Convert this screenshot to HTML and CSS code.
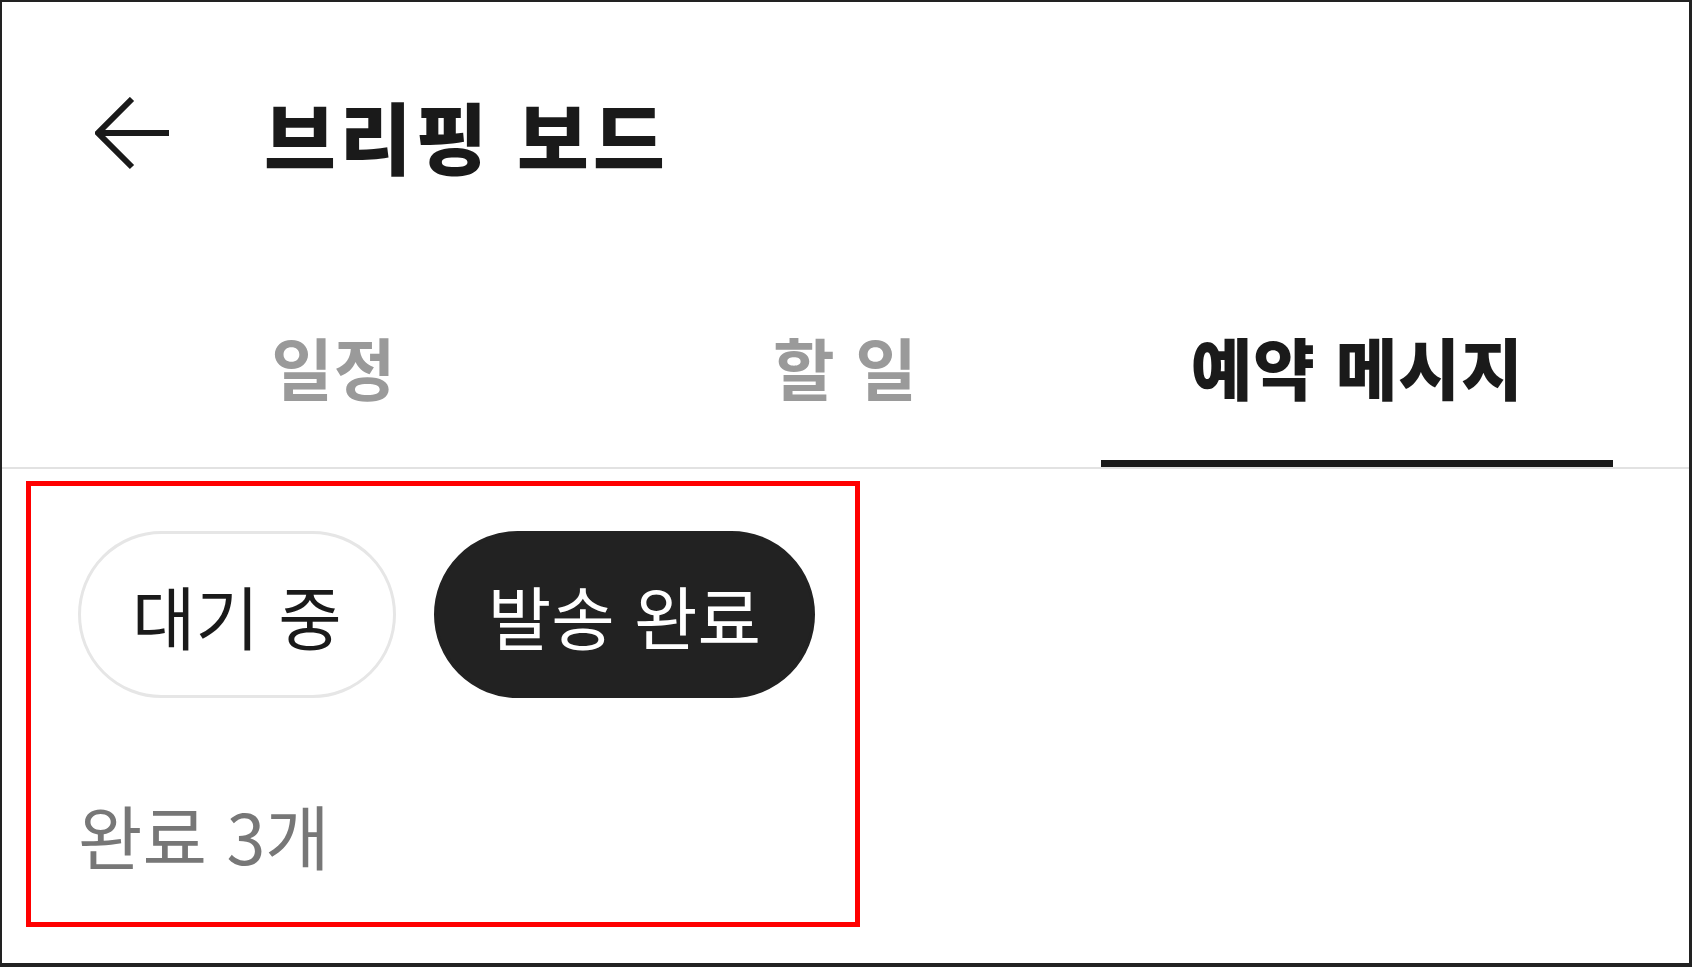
FILE: index.html
```html
<!DOCTYPE html>
<html lang="ko">
<head>
    <meta charset="UTF-8">
    <meta name="viewport" content="width=device-width, initial-scale=1.0">
    <title>브리핑 보드</title>
    <link rel="stylesheet" href="styles.css">
</head>
<body>
    <div class="screen">
        <header class="header">
            <button class="back-btn" aria-label="뒤로">
                <svg width="75" height="74" viewBox="0 0 75 74">
                    <path d="M37 2 L3 36 L37 70 M3 36 L74 36" fill="none" stroke="#1a1a1a" stroke-width="6"/>
                </svg>
            </button>
            <h1 class="title">브리핑 보드</h1>
        </header>

        <nav class="tabs-bar">
            <div class="tab">일정</div>
            <div class="tab">할 일</div>
            <div class="tab active">예약 메시지</div>
        </nav>

        <section class="content">
            <div class="chips">
                <button class="chip">대기 중</button>
                <button class="chip selected">발송 완료</button>
            </div>
            <p class="count">완료 3개</p>
        </section>

        <div class="highlight"></div>
    </div>
</body>
</html>
```

FILE: styles.css
```css
* {
    box-sizing: border-box;
}
body {
    margin: 0;
    background: #fff;
    font-family: "Noto Sans CJK KR", "Noto Sans", sans-serif;
    color: #1a1a1a;
}
.screen {
    position: relative;
    width: 1692px;
    height: 967px;
    border: 2px solid #222;
    border-right-width: 3px;
    border-bottom-width: 4px;
    background: #fff;
    overflow: hidden;
}
.header {
    display: flex;
    align-items: center;
    height: 268px;
    padding-left: 93px;
}
.back-btn {
    display: flex;
    padding: 0;
    border: none;
    background: none;
    margin-top: -4px;
}
.title {
    margin: 0 0 0 94px;
    font-size: 78px;
    font-weight: 900;
    letter-spacing: 4px;
    line-height: 1.2;
}
.tabs-bar {
    display: grid;
    grid-template-columns: repeat(3, 1fr);
    padding: 0 76px;
    border-bottom: 2px solid #e2e2e2;
}
.tab {
    text-align: center;
    font-size: 67px;
    font-weight: 700;
    color: #9a9a9a;
    letter-spacing: 1px;
    line-height: 90px;
    padding: 51px 0 49px;
    border-bottom: 7px solid transparent;
}
.tab.active {
    color: #1a1a1a;
    font-weight: 900;
    border-bottom-color: #1a1a1a;
}
.content {
    padding: 62px 76px 0;
}
.chips {
    display: flex;
    gap: 38px;
}
.chip {
    height: 167px;
    padding: 0 51px;
    border: 3px solid #e6e6e6;
    border-radius: 999px;
    background: #fff;
    font-family: inherit;
    font-size: 69px;
    color: #1a1a1a;
}
.chip.selected {
    background: #222;
    border-color: #222;
    color: #fff;
}
.count {
    margin: 96px 0 0;
    font-size: 70px;
    color: #777;
    line-height: 82px;
}
.highlight {
    position: absolute;
    left: 24px;
    top: 479px;
    width: 834px;
    height: 446px;
    border: 5px solid #f00;
    pointer-events: none;
}
```
